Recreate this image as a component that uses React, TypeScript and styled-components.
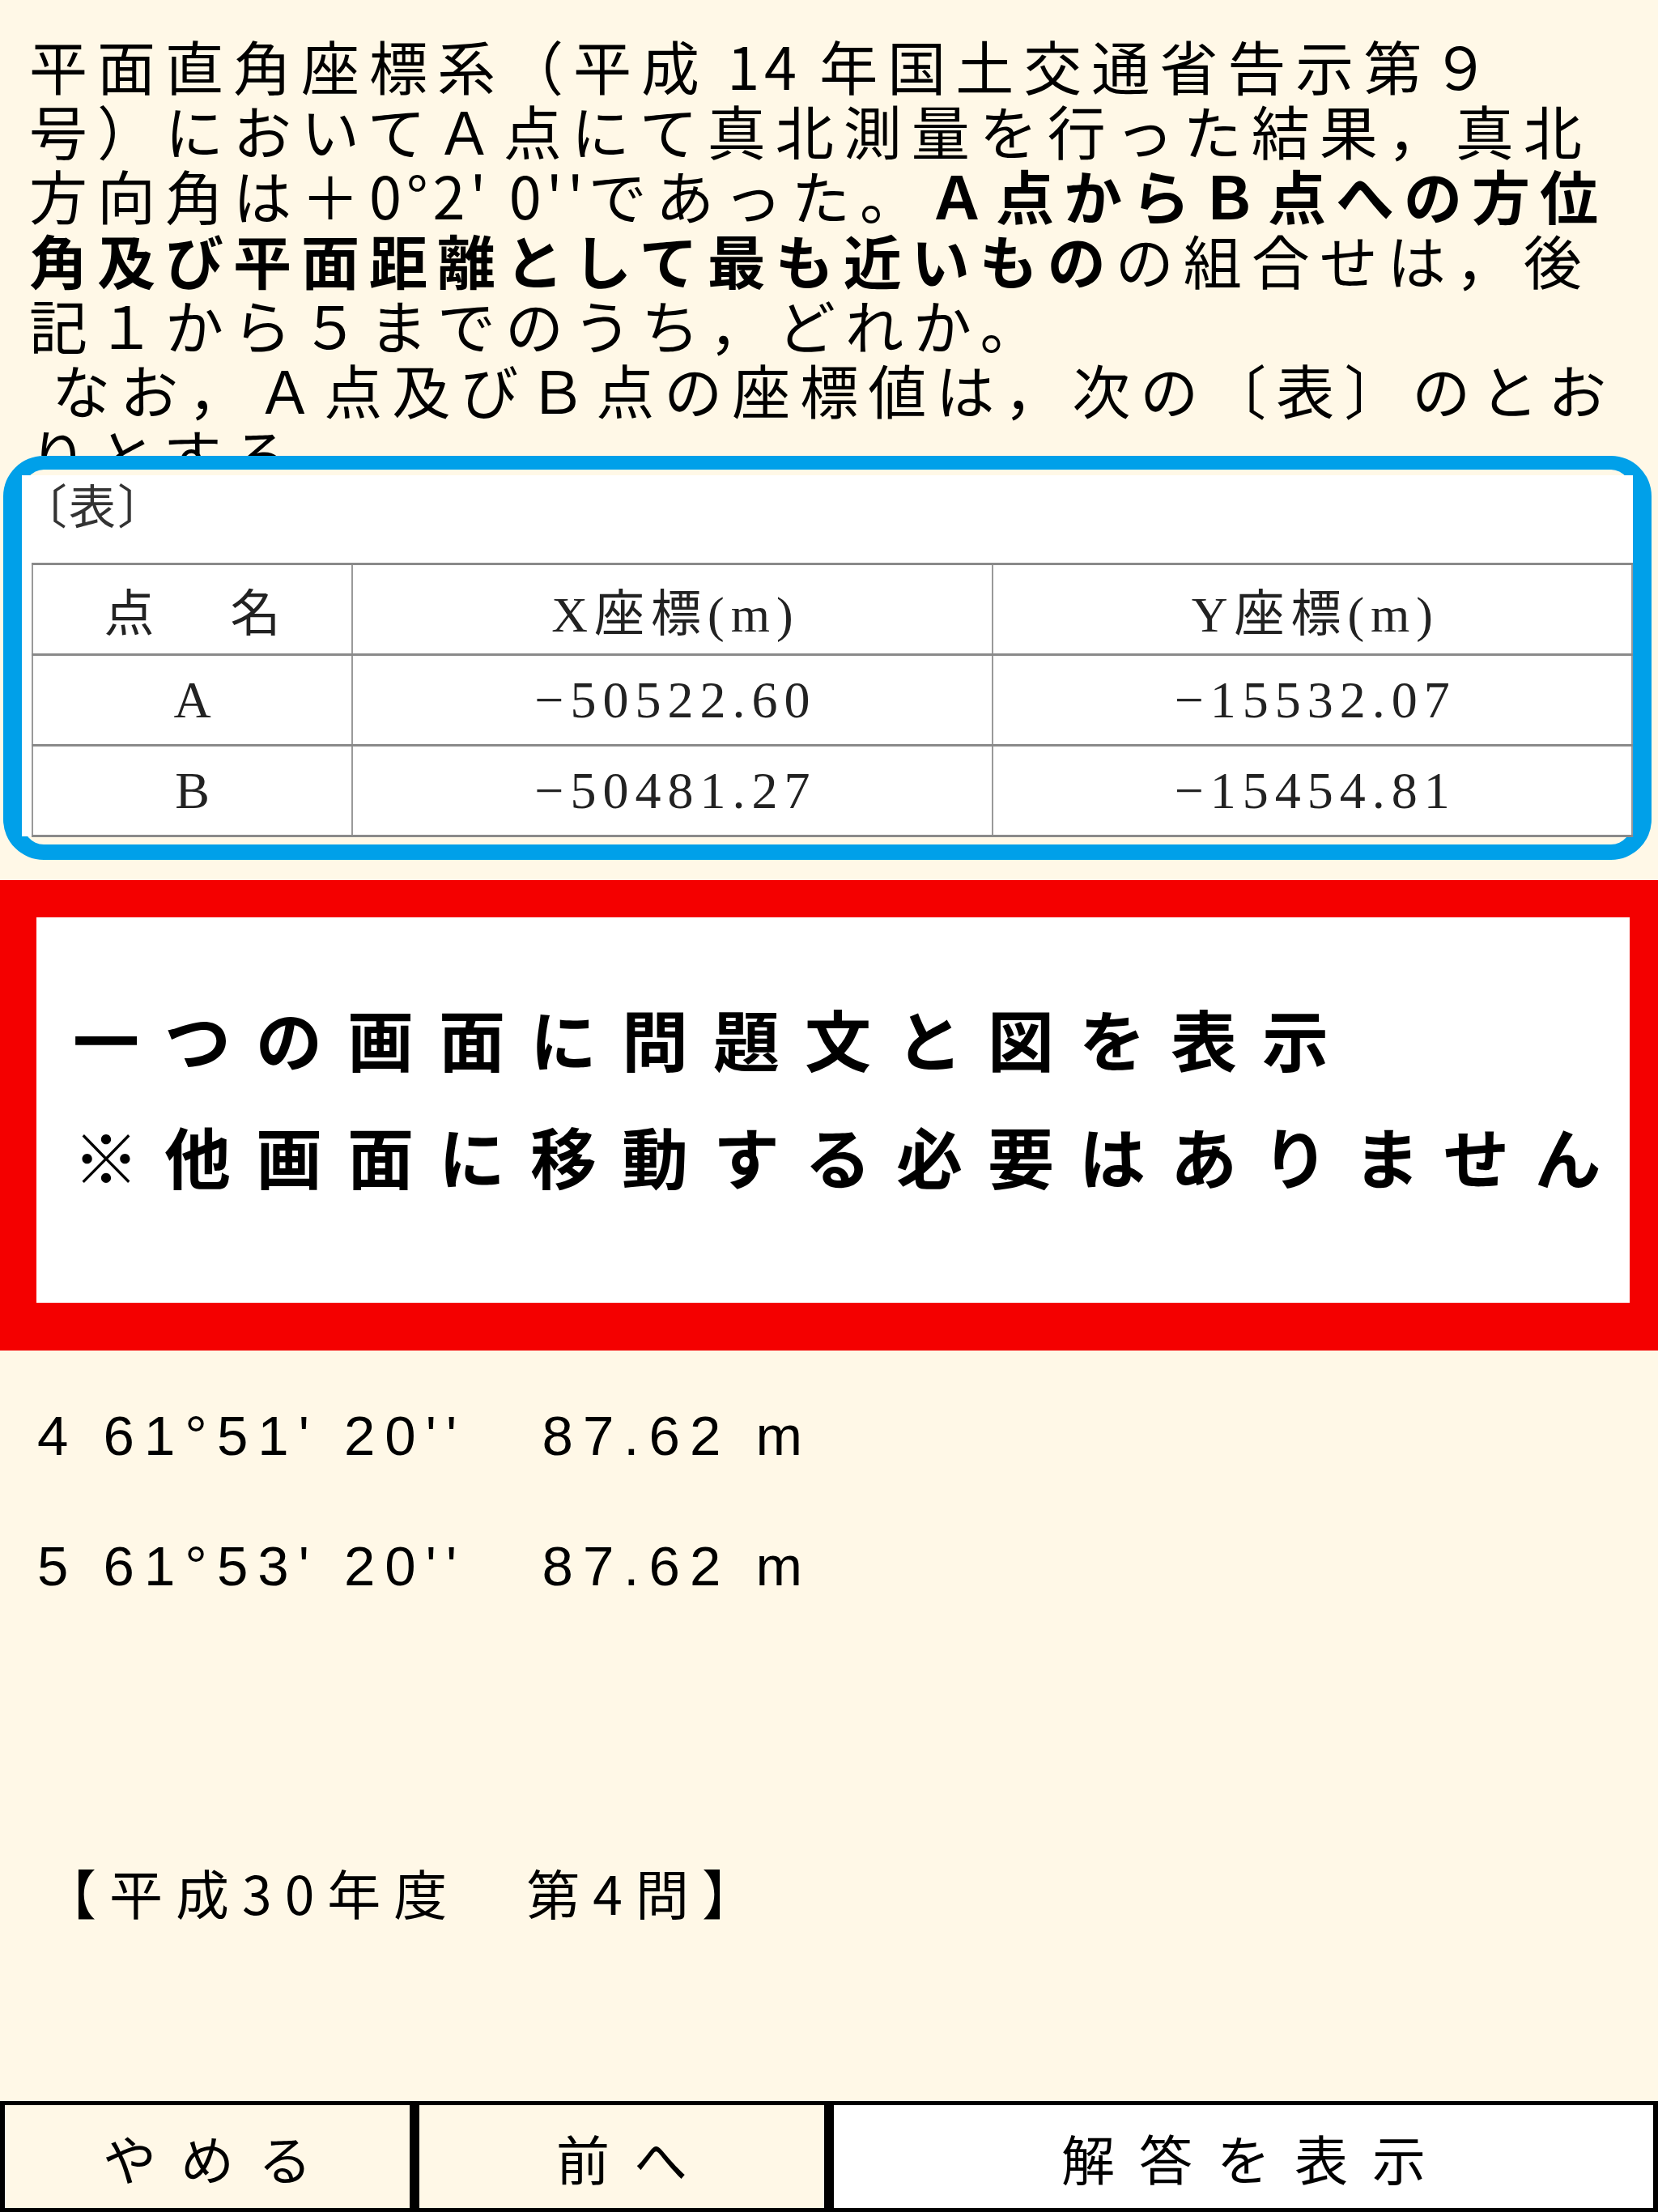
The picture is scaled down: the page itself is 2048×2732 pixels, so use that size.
import React from "react";
import styled, { createGlobalStyle } from "styled-components";

const CREAM = "#fff8e7";
const SANS_JP = `"Noto Sans CJK JP", "Noto Sans", sans-serif`;

const GlobalStyle = createGlobalStyle`
  html, body {
    margin: 0;
    padding: 0;
    background-color: ${CREAM};
  }
  * {
    box-sizing: border-box;
  }
`;

const Page = styled.div`
  display: flex;
  flex-direction: column;
  height: 100vh;
  overflow: hidden;
  background-color: ${CREAM};
  color: #000;
`;

const Question = styled.div`
  height: 563px;
  overflow: hidden;
  padding: 40px 0 0 36px;
  font-family: ${SANS_JP};
  font-size: 72px;
  line-height: 80px;
  letter-spacing: 12px;
  white-space: pre;
`;

const Line = styled.div`
  display: block;
  height: 80px;
`;

const Strong = styled.span`
  display: inline-block;
  height: 80px;
  font-weight: 700;
`;

// half-width runs in the question sit tighter than the kanji
const Narrow = styled.span`
  letter-spacing: 6px;
`;

const Frame = styled.div`
  margin: 0 8px 0 4px;
  border-style: solid;
  border-color: #00a0e9;
  border-width: 17px 23px 19px 23px;
  border-radius: 50px;
  background-color: ${CREAM};
  padding: 7px 0 10px 0;
`;

const Sheet = styled.div`
  background-color: #fff;
  height: 446px;
  padding: 0 0 3px 12px;
  display: flex;
  flex-direction: column;
`;

const Caption = styled.div`
  height: 70px;
  line-height: 70px;
  margin-left: -14px;
  font-family: ${SANS_JP};
  font-size: 58px;
  letter-spacing: 2px;
  color: #333;
`;

const CoordTable = styled.table`
  margin-top: 38px;
  width: 100%;
  border-collapse: collapse;
  table-layout: fixed;
`;

const Row = styled.tr`
  height: 112px;
`;

const Cell = styled.td<{ $head?: boolean; $wide?: boolean }>`
  padding: 0 0 0 ${(p) => (p.$wide ? 16 : 8)}px;
  border-top: 3px solid #8a8a8a;
  border-bottom: 3px solid #8a8a8a;
  border-left: 2px solid #9a9a9a;
  border-right: 2px solid #9a9a9a;
  text-align: center;
  vertical-align: middle;
  font-family: "Liberation Serif", ${SANS_JP};
  font-size: ${(p) => (p.$head ? 62 : 64)}px;
  letter-spacing: ${(p) => (p.$wide ? 16 : 8)}px;
  color: #222;
  white-space: nowrap;
`;

const Notice = styled.div`
  margin-top: 25px;
  height: 581px;
  border-style: solid;
  border-color: #f40000;
  border-width: 46px 35px 59px 45px;
  background-color: #fff;
  display: flex;
  flex-direction: column;
  justify-content: center;
  padding: 0 0 34px 45px;
`;

const NoticeLine = styled.div`
  font-family: ${SANS_JP};
  font-weight: 700;
  font-size: 82px;
  line-height: 145px;
  letter-spacing: 31px;
  white-space: nowrap;
`;

const Answers = styled.div`
  margin-top: 25px;
  padding-left: 46px;
  font-family: "Liberation Sans", Arial, sans-serif;
  font-size: 69px;
  line-height: 161px;
  letter-spacing: 12px;
  white-space: pre;
`;

const YearLabel = styled.div`
  margin-top: 271px;
  padding-left: 53px;
  font-family: ${SANS_JP};
  font-size: 66px;
  line-height: 100px;
  letter-spacing: 16px;
  white-space: pre;
`;

const Footer = styled.div`
  margin-top: auto;
  display: grid;
  grid-template-columns: 1fr 1fr 2fr;
  height: 137px;
`;

const FooterButton = styled.button<{ $primary?: boolean }>`
  border-style: solid;
  border-color: #000;
  border-width: 5px 6px;
  margin: 0;
  padding: 0 0 0 30px;
  background-color: ${(p) => (p.$primary ? "#fff" : CREAM)};
  font-family: ${SANS_JP};
  font-size: 66px;
  letter-spacing: 30px;
  color: #000;
  cursor: pointer;
`;

const points = [
  { name: "A", x: "−50522.60", y: "−15532.07" },
  { name: "B", x: "−50481.27", y: "−15454.81" },
];

const choices = ["4 61°51' 20''   87.62 m", "5 61°53' 20''   87.62 m"];

const App = () => {
  return (
    <Page>
      <GlobalStyle />
      <Question>
        <Line>
          平面直角座標系（平成<Narrow> 14 </Narrow>年国土交通省告示第９
        </Line>
        <Line>号）においてＡ点にて真北測量を行った結果，真北</Line>
        <Line>
          方向角は＋<Narrow>0°2' 0''</Narrow>であった。
          <Strong>Ａ点からＢ点への方位</Strong>
        </Line>
        <Line>
          <Strong>角及び平面距離として最も近いもの</Strong>の組合せは，後
        </Line>
        <Line>記１から５までのうち，どれか。</Line>
        <Line> なお，Ａ点及びＢ点の座標値は，次の〔表〕のとお</Line>
        <Line>りとする。</Line>
      </Question>

      <Frame>
        <Sheet>
          <Caption>〔表〕</Caption>
          <CoordTable>
            <colgroup>
              <col style={{ width: "20%" }} />
              <col style={{ width: "40%" }} />
              <col style={{ width: "40%" }} />
            </colgroup>
            <tbody>
              <Row>
                <Cell $head $wide>
                  点　名
                </Cell>
                <Cell $head>X座標(m)</Cell>
                <Cell $head>Y座標(m)</Cell>
              </Row>
              {points.map((p) => (
                <Row key={p.name}>
                  <Cell>{p.name}</Cell>
                  <Cell>{p.x}</Cell>
                  <Cell>{p.y}</Cell>
                </Row>
              ))}
            </tbody>
          </CoordTable>
        </Sheet>
      </Frame>

      <Notice>
        <NoticeLine>一つの画面に問題文と図を表示</NoticeLine>
        <NoticeLine>※他画面に移動する必要はありません</NoticeLine>
      </Notice>

      <Answers>
        {choices.map((c) => (
          <div key={c}>{c}</div>
        ))}
      </Answers>

      <YearLabel>【平成30年度　第4問】</YearLabel>

      <Footer>
        <FooterButton>やめる</FooterButton>
        <FooterButton>前へ</FooterButton>
        <FooterButton $primary>解答を表示</FooterButton>
      </Footer>
    </Page>
  );
};

export default App;
